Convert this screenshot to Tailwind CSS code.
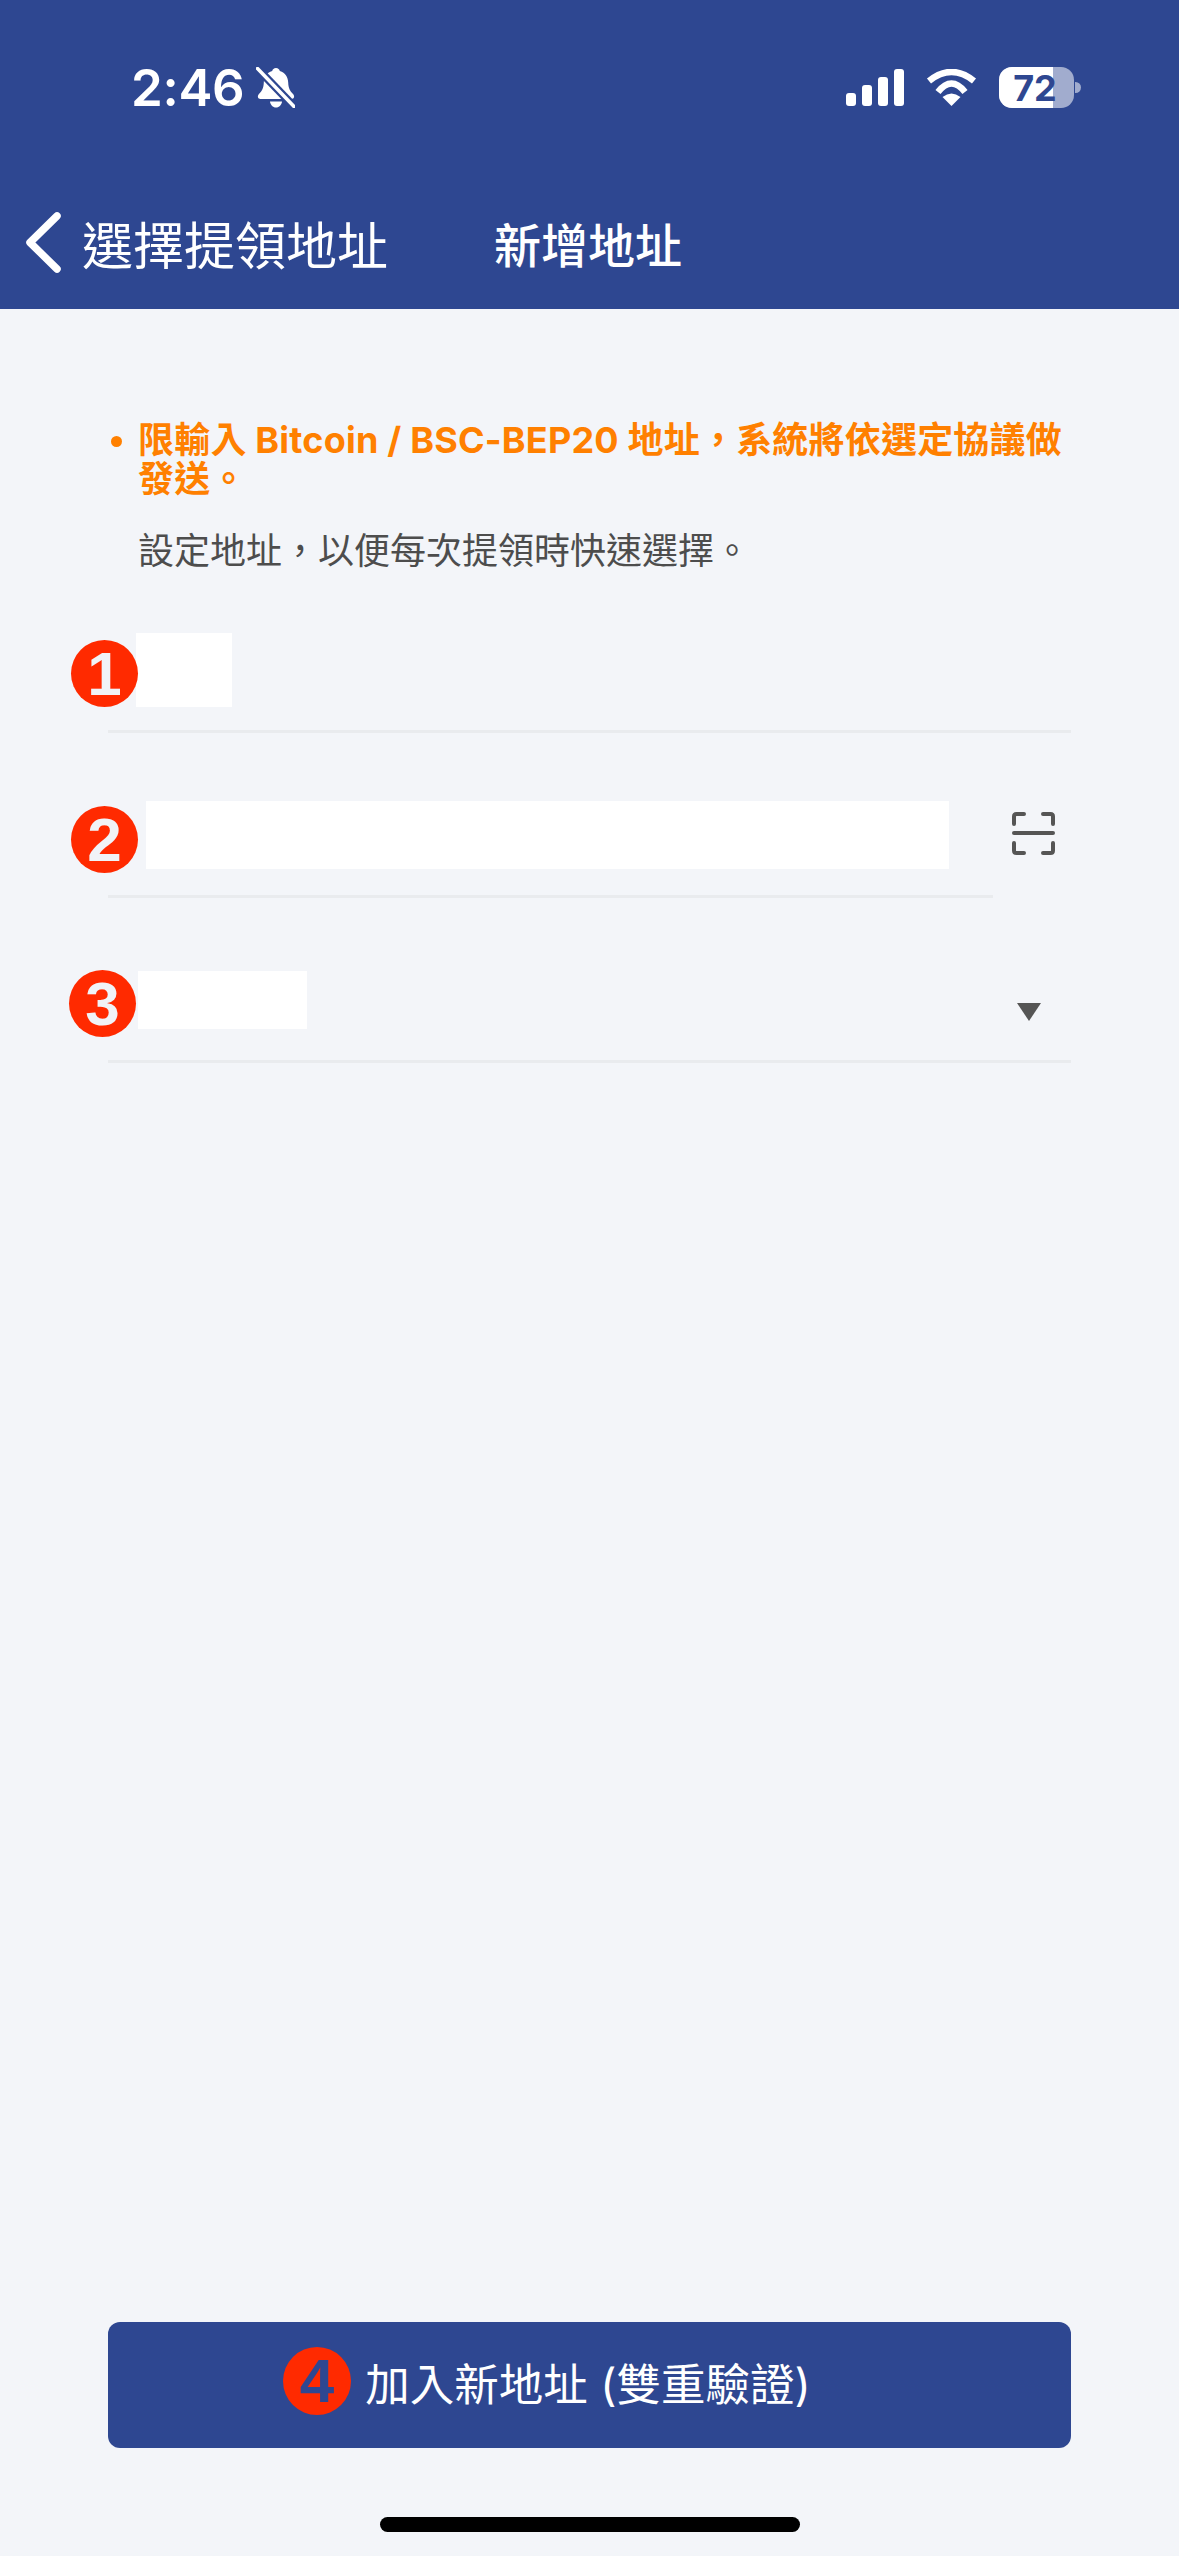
<!doctype html>
<html lang="zh-Hant">
<head>
<meta charset="utf-8">
<script src="https://cdn.jsdelivr.net/npm/@tailwindcss/browser@4"></script>
</head>
<body class="m-0">
<div class="w-[1179px] h-[2556px] flex flex-col bg-[#f3f5f9] font-['Inter','Noto_Sans_CJK_TC',sans-serif] overflow-hidden">
  <header class="h-[309px] shrink-0 bg-[#2e4791] flex flex-col text-white">
    <div class="h-[175px] shrink-0 flex items-start justify-between pt-[67px] pl-[131px] pr-[98px]">
      <div class="flex items-center gap-[12px] h-[41px]">
        <span class="text-[51px] leading-[41px] font-semibold tracking-[-0.3px] font-['Inter',sans-serif]">2:46</span>
        <svg class="w-[39px] h-[41px]" viewBox="0 0 39 41" fill="none">
          <path d="M20 1c2.200 0 3.400 1.400 3.800 3 5.700 1.600 8.200 6.400 8.400 11.500.2 5.500 1.800 8.500 4.800 11.500 2 2 1.200 5-1.500 5H4.500C1.800 32 1 29 3 27c3-3 4.600-6 4.800-11.500C8 10.400 10.500 5.600 16.200 4 16.600 2.400 17.800 1 20 1Z" fill="#fff"/>
          <path d="M14 34.500h12c-.3 3.300-2.800 6-6 6s-5.700-2.700-6-6Z" fill="#fff"/>
          <path d="M1.500 1.500 38 39.500" stroke="#2e4791" stroke-width="8"/>
          <path d="M1.500 1.500 38 39.500" stroke="#fff" stroke-width="3.500" stroke-linecap="round"/>
        </svg>
      </div>
      <div class="flex items-start">
        <div class="flex items-end gap-[6px] h-[37px] mt-[2px]">
          <span class="w-[10px] h-[13px] rounded-[3px] bg-white"></span>
          <span class="w-[10px] h-[21px] rounded-[3px] bg-white"></span>
          <span class="w-[10px] h-[29px] rounded-[3px] bg-white"></span>
          <span class="w-[10px] h-[37px] rounded-[3px] bg-white"></span>
        </div>
        <svg class="w-[51px] h-[37px] ml-[22px] mt-[2px]" viewBox="0 0 51 37" fill="none">
          <path d="M3 12Q25.500-6 48 12" stroke="#fff" stroke-width="6.500"/>
          <path d="M12 23Q25.500 6 39 23" stroke="#fff" stroke-width="6.500"/>
          <path d="M25.500 37 16.500 28Q25.500 21 34.500 28Z" fill="#fff"/>
        </svg>
        <div class="relative ml-[22px] w-[75px] h-[41px] rounded-[13px] overflow-hidden bg-white/55">
          <div class="absolute left-0 top-0 h-full w-[54px] bg-white"></div>
          <div class="absolute inset-x-0 top-0 h-full pr-[3px] flex items-center justify-center text-[36px] leading-none font-bold text-[#2e4791] font-['Inter',sans-serif]">72</div>
        </div>
        <div class="ml-[1px] mt-[15px] w-[6px] h-[11px] rounded-r-full bg-white/55"></div>
      </div>
    </div>
    <nav class="flex items-start">
      <svg class="w-[36px] h-[61px] ml-[25px] mt-[37px]" viewBox="0 0 36 61" fill="none">
        <path d="M32 4 5 30.500 32 57" stroke="#fff" stroke-width="7.500" stroke-linecap="round" stroke-linejoin="round"/>
      </svg>
      <span class="ml-[21px] mt-[42px] text-[51px] leading-[60px] font-normal whitespace-nowrap">選擇提領地址</span>
      <span class="ml-[106px] mt-[41px] text-[47px] leading-[60px] font-medium whitespace-nowrap">新增地址</span>
    </nav>
  </header>

  <main class="flex-1 flex flex-col pt-[112px]">
    <div class="pl-[108px] pr-[108px]">
      <div class="flex items-start">
        <span class="mt-[15px] ml-[3px] w-[11px] h-[11px] rounded-full bg-[#ff8000] shrink-0"></span>
        <p class="ml-[16px] text-[#ff8000] text-[36px] leading-[39px] font-bold tracking-[0.2px]">限輸入 Bitcoin / BSC-BEP20 地址，系統將依選定協議做發送。</p>
      </div>
      <p class="ml-[30px] mt-[33px] text-[#4d4d4d] text-[36px] leading-[39px] whitespace-nowrap">設定地址，以便每次提領時快速選擇。</p>
    </div>

    <div class="ml-[108px] w-[963px] -mt-[3px]">
      <div class="relative h-[165px] border-b-[3px] border-[#e9ebee]">
        <div class="absolute left-[28px] top-[65px] w-[96px] h-[74px] bg-white"></div>
        <span class="absolute left-[-37px] top-[72px] w-[67px] h-[67px] rounded-full bg-[#ff2a00] text-[#f1f3f7] flex items-center justify-center text-[62px] leading-none font-bold font-['Liberation_Sans',sans-serif]">1</span>
      </div>
      <div class="relative h-[165px] flex">
        <div class="w-[885px] border-b-[3px] border-[#e9ebee]"></div>
        <svg class="w-[43px] h-[43px] ml-[19px] mt-[79px]" viewBox="0 0 43 43" fill="none" stroke="#555" stroke-width="4" stroke-linecap="round" stroke-linejoin="round">
          <path d="M2 12V4.500Q2 2 4.500 2H12"/>
          <path d="M31 2H38.500Q41 2 41 4.500V12"/>
          <path d="M2 31V38.500Q2 41 4.500 41H12"/>
          <path d="M31 41H38.500Q41 41 41 38.500V31"/>
          <path d="M2 21H41"/>
        </svg>
        <div class="absolute left-[38px] top-[68px] w-[803px] h-[68px] bg-white"></div>
        <span class="absolute left-[-37px] top-[73px] w-[67px] h-[67px] rounded-full bg-[#ff2a00] text-[#f1f3f7] flex items-center justify-center text-[62px] leading-none font-bold font-['Liberation_Sans',sans-serif]">2</span>
      </div>
      <div class="relative h-[165px] border-b-[3px] border-[#e9ebee] flex justify-end">
        <svg class="w-[24px] h-[18px] mr-[30px] mt-[105px]" viewBox="0 0 24 18"><path d="M0 0H24L12 18Z" fill="#555"/></svg>
        <div class="absolute left-[30px] top-[73px] w-[169px] h-[58px] bg-white"></div>
        <span class="absolute left-[-39px] top-[72px] w-[67px] h-[67px] rounded-full bg-[#ff2a00] text-[#f1f3f7] flex items-center justify-center text-[62px] leading-none font-bold font-['Liberation_Sans',sans-serif]">3</span>
      </div>
    </div>

    <div class="mt-auto flex flex-col items-center">
      <button class="relative w-[963px] h-[126px] rounded-[12px] bg-[#2e4791] text-white text-[44.500px] leading-none flex items-center justify-center pr-[3px]">
        <span class="absolute left-[175px] top-[25px] w-[68px] h-[68px] rounded-full bg-[#ff2a00] text-[#2e4791] flex items-center justify-center text-[62px] leading-none font-bold font-['Liberation_Sans',sans-serif]">4</span>
        加入新地址 (雙重驗證)
      </button>
      <div class="mt-[69px] mb-[24px] w-[420px] h-[15px] rounded-full bg-black"></div>
    </div>
  </main>
</div>
</body>
</html>
